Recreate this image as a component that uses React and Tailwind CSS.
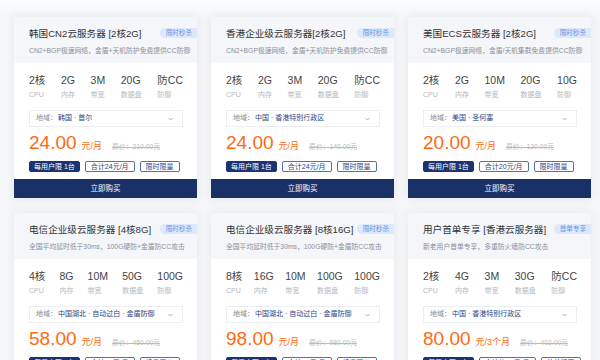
import React from "react";

const cards = [
  {
    title: "韩国CN2云服务器 [2核2G]",
    badge: "限时秒杀",
    sub: "CN2+BGP极速网络，金盾+天机防护免费提供CC防御",
    specs: [["2核", "CPU"], ["2G", "内存"], ["3M", "带宽"], ["20G", "数据盘"], ["防CC", "防御"]],
    region: "韩国 · 首尔",
    price: "24.00",
    unit: "元/月",
    orig: "原价：210.00元",
    tags: ["每用户限 1台", "合计24元/月", "限时限量"],
  },
  {
    title: "香港企业级云服务器[2核2G]",
    badge: "限时秒杀",
    sub: "CN2+BGP极速网络，金盾+天机防护免费提供CC防御",
    specs: [["2核", "CPU"], ["2G", "内存"], ["3M", "带宽"], ["20G", "数据盘"], ["防CC", "防御"]],
    region: "中国 · 香港特别行政区",
    price: "24.00",
    unit: "元/月",
    orig: "原价：140.00元",
    tags: ["每用户限 1台", "合计24元/月", "限时限量"],
  },
  {
    title: "美国ECS云服务器 [2核2G]",
    badge: "限时秒杀",
    sub: "CN2+BGP极速网络，金盾/天机集群免费提供CC防御",
    specs: [["2核", "CPU"], ["2G", "内存"], ["10M", "带宽"], ["20G", "数据盘"], ["10G", "防御"]],
    region: "美国 · 圣何塞",
    price: "20.00",
    unit: "元/月",
    orig: "原价：120.00元",
    tags: ["每用户限 1台", "合计20元/月", "限时限量"],
  },
  {
    title: "电信企业级云服务器 [4核8G]",
    badge: "限时秒杀",
    sub: "全国平均延时低于30ms，100G硬防+金盾防CC攻击",
    specs: [["4核", "CPU"], ["8G", "内存"], ["10M", "带宽"], ["50G", "数据盘"], ["100G", "防御"]],
    region: "中国湖北 · 自动过白 · 金盾防御",
    price: "58.00",
    unit: "元/月",
    orig: "原价：450.00元",
    tags: ["每用户限 1台", "合计58元/月", "续费同价"],
  },
  {
    title: "电信企业级云服务器 [8核16G]",
    badge: "限时秒杀",
    sub: "全国平均延时低于30ms，100G硬防+金盾防CC攻击",
    specs: [["8核", "CPU"], ["16G", "内存"], ["10M", "带宽"], ["100G", "数据盘"], ["100G", "防御"]],
    region: "中国湖北 · 自动过白 · 金盾防御",
    price: "98.00",
    unit: "元/月",
    orig: "原价：980.00元",
    tags: ["每用户限 1台", "合计98元/月", "续费同价"],
  },
  {
    title: "用户首单专享 [香港云服务器]",
    badge: "首单专享",
    sub: "新老用户首单专享，多重防火墙防CC攻击",
    specs: [["2核", "CPU"], ["4G", "内存"], ["3M", "带宽"], ["30G", "数据盘"], ["防CC", "防御"]],
    region: "中国 · 香港特别行政区",
    price: "80.00",
    unit: "元/3个月",
    orig: "原价：402.00元",
    tags: ["每用户限 1台", "合计约26元/月", "首单特惠"],
  },
];

function Card({ c }) {
  return (
    <div className="relative w-[183px] h-[181px] bg-white shadow-[0_0_10px_rgba(30,40,80,0.07)] flex flex-col">
      <div className="bg-[#f4f6fa] px-[15px] pt-[10px] pb-[7px] h-[46px]">
        <div className="text-[9.6px] leading-[14px] text-[#333] whitespace-nowrap">{c.title}</div>
        <div className="mt-[5px] text-[6.8px] leading-[10px] text-[#8a8f99] whitespace-nowrap">{c.sub}</div>
      </div>
      <div className="absolute right-0 top-[11px] h-[10px] pl-[6px] pr-[5px] rounded-l-full bg-[#dde8fc] text-[#6a95e2] text-[6.6px] leading-[10px] whitespace-nowrap">
        {c.badge}
      </div>
      <div className="px-[15px] pr-[14px] pt-[10px] flex flex-col">
        <div className="flex justify-between">
          {c.specs.map(([v, l]) => (
            <div key={l} className="flex flex-col">
              <div className="text-[10.5px] leading-[14px] text-[#444] whitespace-nowrap">{v}</div>
              <div className="mt-[3px] text-[7px] leading-[10px] text-[#b4b8bf] whitespace-nowrap">{l}</div>
            </div>
          ))}
        </div>
        <div className="mt-[10px] h-[17px] border border-[#eceef2] flex items-center pl-[6px] pr-[9px] text-[7px] whitespace-nowrap">
          <span className="text-[#888]">地域：</span>
          <span className="ml-[1px] text-[#2b4582]">{c.region}</span>
          <svg className="ml-auto" width="5" height="4" viewBox="0 0 5 4">
            <path d="M0.5 1 L2.5 3 L4.5 1" fill="none" stroke="#999" strokeWidth="0.8" />
          </svg>
        </div>
        <div className="mt-[5px] h-[22px] flex items-baseline whitespace-nowrap">
          <span className="text-[19px] leading-[22px] text-[#ff6a10] font-['Liberation_Sans',Arial,sans-serif]">{c.price}</span>
          <span className="ml-[5px] text-[9px] text-[#ff6a10]">{c.unit}</span>
          <span className="ml-[10px] text-[6.8px] text-[#bbb] line-through">{c.orig}</span>
        </div>
        <div className="mt-[7px] flex gap-[5px]">
          {c.tags.map((t, i) => (
            <div
              key={t}
              className={
                i === 0
                  ? "h-[11px] px-[4px] rounded-[2px] border border-[#1b3370] bg-[#1b3370] text-white text-[7px] leading-[9px] whitespace-nowrap"
                  : "h-[11px] px-[5px] rounded-[2px] border border-[#5670a6] text-[#2b4582] text-[7px] leading-[9px] whitespace-nowrap"
              }
            >
              {t}
            </div>
          ))}
        </div>
      </div>
      <div className="mt-auto h-[19px] bg-[#1a3168] text-white text-[7.5px] flex items-center justify-center">
        立即购买
      </div>
    </div>
  );
}

export default function App() {
  return (
    <div className="w-[600px] h-[360px] overflow-hidden bg-[#f5f6f8] font-['Liberation_Sans','Noto_Sans_CJK_SC',sans-serif]">
      <div className="h-[17px] bg-gradient-to-b from-[#fbfcfd] to-[#f5f6f8]" />
      <div className="pl-[14px] grid grid-cols-[183px_183px_183px] gap-x-[14px] gap-y-[15px]">
        {cards.map((c) => (
          <Card key={c.title} c={c} />
        ))}
      </div>
    </div>
  );
}
